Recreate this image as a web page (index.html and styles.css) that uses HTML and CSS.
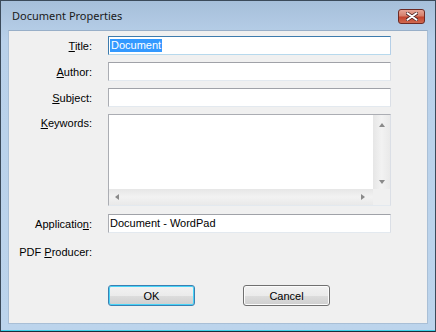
FILE: index.html
```html
<!DOCTYPE html>
<html lang="en">
<head>
  <meta charset="UTF-8">
  <title>Document Properties</title>
  <link rel="stylesheet" href="styles.css">
</head>
<body>
  <div class="window">
    <div class="titlebar">
      <span class="title">Document Properties</span>
      <div class="close">
        <svg width="12" height="9" viewBox="0 0 12 9">
          <path d="M1 1 L11 8 M11 1 L1 8" stroke="#4a2020" stroke-width="3.4" stroke-linecap="round"/>
          <path d="M1.5 1.2 L10.5 7.8 M10.5 1.2 L1.5 7.8" stroke="#fff" stroke-width="2" stroke-linecap="round"/>
        </svg>
      </div>
    </div>

    <div class="client">
      <div class="form">
        <label class="lbl"><u>T</u>itle:</label>
        <div class="field focused"><span class="sel">Document</span></div>

        <label class="lbl"><u>A</u>uthor:</label>
        <div class="field"></div>

        <label class="lbl"><u>S</u>ubject:</label>
        <div class="field"></div>

        <label class="lbl top"><u>K</u>eywords:</label>
        <div class="area">
          <div class="area-main">
            <div class="area-text"></div>
            <div class="vscroll">
              <span class="arr up"></span>
              <span class="arr down"></span>
            </div>
          </div>
          <div class="hrow">
            <div class="hscroll">
              <span class="arr left"></span>
              <span class="arr right"></span>
            </div>
            <div class="corner"></div>
          </div>
        </div>

        <label class="lbl app">Applicatio<u>n</u>:</label>
        <div class="field app">Document - WordPad</div>

        <label class="lbl pdf">PDF <u>P</u>roducer:</label>
        <div class="pdf"></div>
      </div>

      <div class="buttons">
        <button class="btn default">OK</button>
        <button class="btn">Cancel</button>
      </div>
    </div>
  </div>
</body>
</html>
```

FILE: styles.css
```css
body {
  margin: 0;
  background: #fff;
}

.window {
  width: 436px;
  height: 332px;
  box-sizing: border-box;
  border: 1px solid #3b4a5a;
  border-bottom-color: #1c2a38;
  background: linear-gradient(#a6bfda, #b9d1ea 40px, #bcd4ec);
  padding: 0 7px 7px 7px;
  display: flex;
  flex-direction: column;
  box-shadow: inset 0 -1px 0 #3fd0e8;
}

.titlebar {
  height: 29px;
  display: flex;
  align-items: center;
  justify-content: space-between;
  padding-left: 4px;
}

.title {
  font-family: "Noto Sans", sans-serif;
  font-size: 11px;
  color: #1a1a1a;
  margin-top: -1px;
}

.close {
  width: 25px;
  height: 13px;
  margin-right: 3px;
  margin-top: 1px;
  border: 1px solid #6d2a24;
  border-radius: 3px;
  background: linear-gradient(#e6a597, #d5806c 45%, #c4442e 55%, #d06a50);
  display: flex;
  align-items: center;
  justify-content: center;
}

.client {
  flex: 1;
  background: #f0f0f0;
  border: 1px solid #a9bfd6;
  border-top-color: #98afc8;
  font-family: "Liberation Sans", Arial, sans-serif;
  font-size: 11px;
  color: #000;
}

.form {
  display: grid;
  grid-template-columns: 83px 283px;
  column-gap: 16px;
  row-gap: 7px;
  padding-top: 5px;
}

.lbl {
  text-align: right;
  align-self: center;
  white-space: nowrap;
}

.lbl.top {
  align-self: start;
  padding-top: 3px;
}

.lbl.app, .field.app {
  margin-top: 1px;
}

.lbl.pdf {
  margin-top: 6px;
}

.field {
  height: 19px;
  box-sizing: border-box;
  background: #fff;
  border: 1px solid #abadb3;
  border-top-color: #a0a2a8;
  border-right-color: #dbdfe6;
  border-bottom-color: #e3e9ef;
  padding: 2px 1px;
  line-height: 13px;
}

.field.focused {
  border-color: #3d7bad;
  border-right-color: #b5cfe7;
  border-bottom-color: #b7d9ed;
}

.sel {
  display: inline-block;
  background: #3399ff;
  color: #fff;
  padding: 0 1px;
}

.area {
  height: 92px;
  box-sizing: border-box;
  background: #fff;
  border: 1px solid #abadb3;
  border-right-color: #dbdfe6;
  border-bottom-color: #e3e9ef;
  display: flex;
  flex-direction: column;
}

.area-main {
  flex: 1;
  display: flex;
}

.area-text {
  flex: 1;
}

.vscroll {
  width: 17px;
  background: linear-gradient(90deg, #e6e6e6, #f2f2f2 50%, #e9e9e9);
  display: flex;
  flex-direction: column;
  justify-content: space-between;
  align-items: center;
  padding: 8px 0 5px;
}

.hrow {
  height: 16px;
  display: flex;
}

.hscroll {
  flex: 1;
  background: linear-gradient(#e6e6e6, #f2f2f2 50%, #e9e9e9);
  display: flex;
  justify-content: space-between;
  align-items: center;
  padding: 0 8px 0 6px;
}

.corner {
  width: 17px;
  background: #f0f0f0;
}

.arr {
  width: 0;
  height: 0;
  border: 3px solid transparent;
}

.arr.up {
  border-top: 0;
  border-bottom: 4px solid #8a8a8a;
}

.arr.down {
  border-bottom: 0;
  border-top: 4px solid #8a8a8a;
}

.arr.left {
  border-left: 0;
  border-right: 4px solid #8a8a8a;
}

.arr.right {
  border-right: 0;
  border-left: 4px solid #8a8a8a;
}

.buttons {
  display: flex;
  gap: 48px;
  padding-left: 99px;
  margin-top: 27px;
}

.btn {
  width: 87px;
  height: 21px;
  font-family: "Liberation Sans", Arial, sans-serif;
  font-size: 11px;
  color: #000;
  border: 1px solid #707070;
  border-radius: 3px;
  background: linear-gradient(#f2f2f2, #ebebeb 50%, #dddddd 51%, #cfcfcf);
  box-shadow: inset 0 0 0 1px #fbfbfb;
  padding: 0;
}

.btn.default {
  border-color: #3c7fb1;
  box-shadow: inset 0 0 0 1px #48d4f8;
}
```
